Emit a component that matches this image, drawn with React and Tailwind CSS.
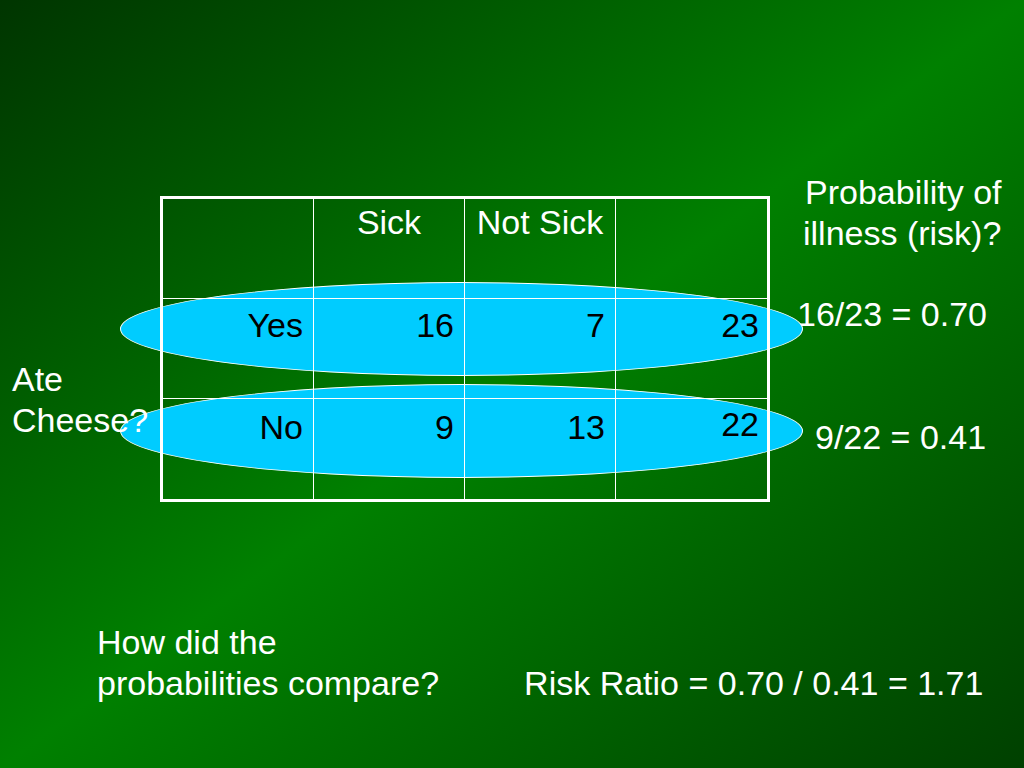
import React from "react";

const ROWS = [
  { label: "Yes", sick: 16, notSick: 7, total: 23, pad: "pt-[6px]", totalPad: "pt-[6px]" },
  { label: "No", sick: 9, notSick: 13, total: 22, pad: "pt-[8px]", totalPad: "pt-[5px]" },
];

function Cell({ children, className = "" }) {
  return <div className={`h-[100px] leading-[1.2] ${className}`}>{children}</div>;
}

export default function App() {
  return (
    <div className="w-[1024px] h-[768px] overflow-hidden bg-[linear-gradient(to_bottom_right,#003500,#008000_50%,#004000)] text-white text-[34px] leading-[1.2] font-['Liberation_Sans',Arial,sans-serif] pt-[170px]">
      {/* table + side labels */}
      <div className="flex items-start">
        <div className="relative z-10 w-[160px] pl-[12px] pt-[189px] whitespace-nowrap">
          <div>Ate</div>
          <div>Cheese?</div>
        </div>

        <div className="relative mt-[26px] w-[610px]">
          {/* highlight ovals */}
          <div className="absolute left-[-40px] top-[86px] w-[683px] h-[94px] rounded-[50%] bg-[#00ccff] border border-white" />
          <div className="absolute left-[-40px] top-[188px] w-[683px] h-[94px] rounded-[50%] bg-[#00ccff] border border-white" />

          <div className="relative grid grid-cols-4 border-[3px] border-white">
            <Cell className="border-r border-b border-white" />
            <Cell className="border-r border-b border-white text-center pt-[3px]">Sick</Cell>
            <Cell className="border-r border-b border-white text-center pt-[3px]">Not Sick</Cell>
            <Cell className="border-b border-white" />
            {ROWS.map((r, i) => {
              const line = i === 0 ? "border-b" : "";
              return (
                <React.Fragment key={r.label}>
                  <Cell className={`border-r ${line} border-white text-right pr-[10px] text-black ${r.pad}`}>{r.label}</Cell>
                  <Cell className={`border-r ${line} border-white text-right pr-[10px] text-black ${r.pad}`}>{r.sick}</Cell>
                  <Cell className={`border-r ${line} border-white text-right pr-[10px] text-black ${r.pad}`}>{r.notSick}</Cell>
                  <Cell className={`${line} border-white text-right pr-[8px] text-black ${r.totalPad}`}>{r.total}</Cell>
                </React.Fragment>
              );
            })}
          </div>
        </div>

        <div className="flex flex-col items-start whitespace-nowrap pt-[2px]">
          <div className="ml-[35px]">Probability of</div>
          <div className="ml-[33px]">illness (risk)?</div>
          <div className="ml-[27px] mt-[40px]">16/23 = 0.70</div>
          <div className="ml-[45px] mt-[83px]">9/22 = 0.41</div>
        </div>
      </div>

      {/* bottom question + ratio */}
      <div className="flex items-end mt-[120px] pl-[97px] whitespace-nowrap">
        <div>
          <div>How did the</div>
          <div>probabilities compare?</div>
        </div>
        <div className="ml-[85px]">Risk Ratio = 0.70 / 0.41 = 1.71</div>
      </div>
    </div>
  );
}
